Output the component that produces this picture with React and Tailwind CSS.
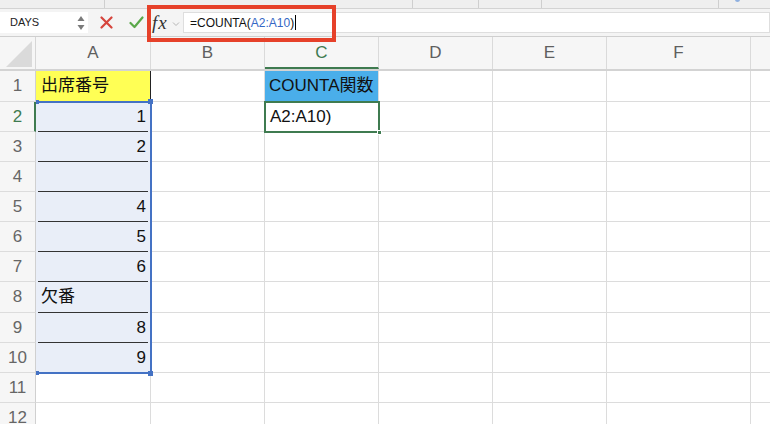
import React from 'react'

const cols = [
  { key: 'A', w: 'w-[115px]' },
  { key: 'B', w: 'w-[114px]' },
  { key: 'C', w: 'w-[114px]' },
  { key: 'D', w: 'w-[114px]' },
  { key: 'E', w: 'w-[114px]' },
  { key: 'F', w: 'w-[144px]' },
]

const colA = {
  1: { text: '出席番号', align: 'left' },
  2: { text: '1' },
  3: { text: '2' },
  4: { text: '' },
  5: { text: '4' },
  6: { text: '5' },
  7: { text: '6' },
  8: { text: '欠番', align: 'left' },
  9: { text: '8' },
  10: { text: '9' },
}

const cellFont = { fontFamily: '"Liberation Sans", "Noto Sans CJK JP", sans-serif' }

function Spinner() {
  return (
    <svg width="8" height="16" viewBox="0 0 8 16" className="mr-[3px]">
      <path d="M4 1 L7.5 6 L0.5 6 Z" fill="#7a7a7a" />
      <path d="M4 15 L7.5 10 L0.5 10 Z" fill="#7a7a7a" />
    </svg>
  )
}

function FormulaBar() {
  return (
    <div className="flex h-[27px] items-start bg-[#f4f4f4] pt-[3px]">
      <div className="flex h-[21px] w-[88px] shrink-0 items-center justify-between bg-white pl-[10px]">
        <span className="text-[11px] text-[#222]">DAYS</span>
        <Spinner />
      </div>
      <div className="flex h-[21px] w-[59px] items-center justify-center gap-[16px] pl-[8px]">
        <svg width="13" height="13" viewBox="0 0 13 13">
          <path d="M1.5 1.5 L11.5 11.5 M11.5 1.5 L1.5 11.5" stroke="#d6453d" strokeWidth="2.2" strokeLinecap="round" />
        </svg>
        <svg width="15" height="13" viewBox="0 0 15 13">
          <path d="M1.5 7 L5.5 11 L13.5 1.5" stroke="#5aa84a" strokeWidth="2.2" fill="none" strokeLinecap="round" strokeLinejoin="round" />
        </svg>
      </div>
      <div className="flex h-[21px] w-[36px] items-center pl-[5px]">
        <span className="text-[19px] italic leading-none tracking-[1px] text-[#333]" style={{ fontFamily: '"Liberation Serif", serif' }}>
          fx
        </span>
        <svg width="8" height="6" viewBox="0 0 8 6" className="ml-[4px] mt-[2px]">
          <path d="M1 1.5 L4 4.5 L7 1.5" stroke="#b5b5b5" strokeWidth="1" fill="none" />
        </svg>
      </div>
      <div className="flex h-[21px] flex-1 items-center border border-[#dedede] bg-white pl-[6px] text-[12px] text-[#111]">
        <span>=COUNTA(</span>
        <span className="text-[#3467c5]">A2:A10</span>
        <span>)</span>
        <span className="ml-[1px] h-[15px] w-[1px] bg-black" />
      </div>
    </div>
  )
}

function HeaderRow() {
  return (
    <div className="flex h-[35px] border-t border-b-2 border-t-[#cfcfcf] border-b-[#d3d3d3] bg-[#f6f6f6]">
      <div className="relative w-[36px] shrink-0 border-r border-[#d6d6d6]">
        <svg width="26" height="26" viewBox="0 0 26 26" className="absolute bottom-[2px] right-[3px]">
          <path d="M26 0 L26 26 L0 26 Z" fill="#dadada" />
        </svg>
      </div>
      {cols.map((c) => (
        <div
          key={c.key}
          className={`${c.w} flex shrink-0 items-center justify-center border-r border-[#dadada] text-[17px] ${
            c.key === 'C' ? 'border-b-2 border-b-[#3f7b50] pt-[2px] text-[#3f7b50]' : 'text-[#5f5f5f]'
          }`}
        >
          {c.key}
        </div>
      ))}
      <div className="flex-1" />
    </div>
  )
}

function Row({ n }) {
  const a = colA[n]
  const inSel = n >= 2 && n <= 10
  // rows 1 and 8 are a pixel taller, as in the sheet
  const h = n === 1 || n === 8 ? 'h-[31px]' : 'h-[30px]'
  return (
    <div className={`flex ${h}`}>
      <div
        className={`flex w-[36px] shrink-0 items-center justify-center border-b border-b-[#dcdcdc] bg-[#f6f6f6] text-[17px] ${
          n === 2 ? 'border-r-2 border-r-[#3f7b50] pl-[1px] text-[#3f7b50]' : 'border-r border-r-[#d0d0d0] text-[#666]'
        }`}
      >
        {n}
      </div>
      {cols.map((c) => {
        let cls = 'border-r border-b border-[#dcdcdc] bg-white'
        let content = null
        if (c.key === 'A' && a) {
          const left = a.align === 'left'
          if (n === 1) {
            cls = 'border-r border-b border-r-[#222] border-b-[#dcdcdc] bg-[#ffff55]'
            content = <span className="flex h-full items-center pl-[5px]">{a.text}</span>
          } else if (inSel) {
            cls = 'border-r border-[#dcdcdc] bg-[#e9eef8]'
            content = (
              <span
                className={`ml-[2px] mr-[2px] flex h-full items-center ${n < 10 ? 'border-b border-[#333]' : 'border-b border-[#dcdcdc]'} ${
                  left ? 'justify-start pl-[3px]' : 'justify-end pr-[2px]'
                }`}
              >
                {a.text}
              </span>
            )
          }
        }
        if (c.key === 'C' && n === 1) {
          cls = 'border-r border-b border-[#dcdcdc] bg-[#4aaeea]'
          content = <span className="flex h-full items-center whitespace-nowrap pl-[4px]">COUNTA関数</span>
        }
        if (c.key === 'C' && n === 2) {
          content = <span className="flex h-full items-center whitespace-nowrap pl-[5px]">A2:A10)</span>
        }
        return (
          <div key={c.key} className={`${c.w} shrink-0 overflow-hidden text-[17px] text-[#111] ${cls}`} style={cellFont}>
            {content}
          </div>
        )
      })}
      <div className="flex-1 border-b border-[#dcdcdc]" />
    </div>
  )
}

export default function App() {
  const rows = Array.from({ length: 12 }, (_, i) => i + 1)
  return (
    <div className="relative h-[424px] w-[770px] overflow-hidden bg-white" style={{ fontFamily: '"Liberation Sans", Arial, sans-serif' }}>
      <div className="flex h-[9px] border-b border-[#d3d3d3] bg-[#efefef]">
        <div className="w-[105px] border-r border-[#cfcfcf]" />
        <div className="w-[308px] border-r border-[#cfcfcf]" />
        <div className="w-[66px] border-r border-[#cfcfcf]" />
        <div className="w-[63px] border-r border-[#cfcfcf]" />
        <div className="w-[177px] border-r border-[#cfcfcf]" />
        <div className="ml-[16px] mt-[-3px] h-[5px] w-[5px] rounded-full bg-[#8fb0e0]" />
      </div>
      <FormulaBar />
      <HeaderRow />
      {rows.map((n) => (
        <Row key={n} n={n} />
      ))}

      {/* range reference highlight A2:A10 */}
      <div className="pointer-events-none absolute left-[36px] top-[101px] h-[273px] w-[116px] border-t-2 border-r-2 border-b-2 border-[#4472c4]" />
      <div className="absolute left-[36px] top-[100px] h-[4px] w-[3px] bg-[#4472c4]" />
      <div className="absolute left-[148px] top-[99px] h-[5px] w-[5px] bg-[#4472c4]" />
      <div className="absolute left-[36px] top-[371px] h-[4px] w-[3px] bg-[#4472c4]" />
      <div className="absolute left-[148px] top-[371px] h-[5px] w-[5px] bg-[#4472c4]" />

      {/* active cell C2 */}
      <div className="pointer-events-none absolute left-[264px] top-[101px] h-[32px] w-[116px] border-2 border-[#3f7b50]" />
      <div className="absolute left-[377px] top-[130px] h-[5px] w-[5px] border border-white bg-[#3f7b50]" />

      {/* annotation box */}
      <div className="pointer-events-none absolute left-[147px] top-[5px] h-[37px] w-[189px] border-4 border-[#e6412a]" />
    </div>
  )
}
